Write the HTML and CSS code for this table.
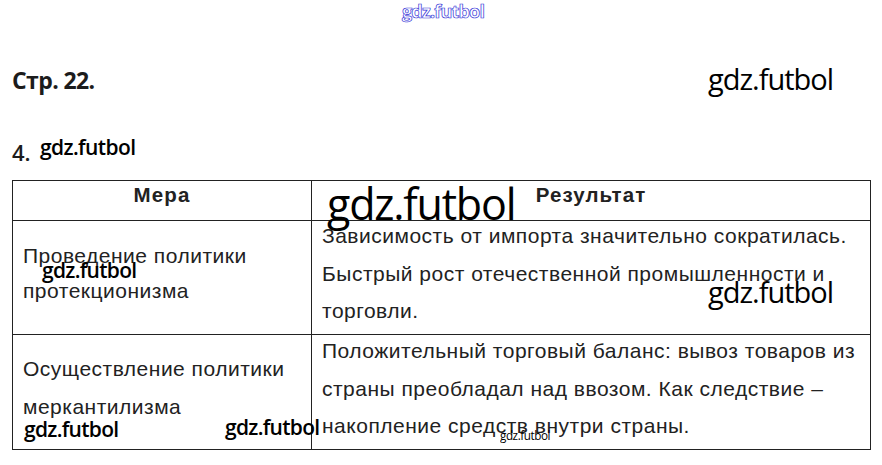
FILE: index.html
```html
<!DOCTYPE html>
<html lang="ru">
<head>
<meta charset="utf-8">
<title>Стр. 22</title>
<link rel="stylesheet" href="styles.css">
</head>
<body>
<div class="page">
  <div class="mark mark-top">gdz.futbol</div>
  <div class="title-row">
    <h1 class="title">Стр. 22.</h1>
  </div>
  <div class="task">4.</div>
  <table class="grid">
    <colgroup><col class="c1"><col class="c2"></colgroup>
    <thead>
      <tr class="head"><th>Мера</th><th>Результат</th></tr>
    </thead>
    <tbody>
      <tr class="r1">
        <td class="measure">Проведение политики<br>протекционизма</td>
        <td class="result"><div class="txt">Зависимость от импорта значительно сократилась.<br>Быстрый рост отечественной промышленности и<br>торговли.</div></td>
      </tr>
      <tr class="r2">
        <td class="measure">Осуществление политики<br>меркантилизма</td>
        <td class="result"><div class="txt">Положительный торговый баланс: вывоз товаров из<br>страны преобладал над ввозом. Как следствие –<br>накопление средств внутри страны.</div></td>
      </tr>
    </tbody>
  </table>

  <div class="mark m-right1">gdz.futbol</div>
  <div class="mark m-task">gdz.futbol</div>
  <div class="mark m-big">gdz.futbol</div>
  <div class="mark m-left1">gdz.futbol</div>
  <div class="mark m-right2">gdz.futbol</div>
  <div class="mark m-left2">gdz.futbol</div>
  <div class="mark m-mid2">gdz.futbol</div>
  <div class="mark m-small">gdz.futbol</div>
</div>
</body>
</html>
```
FILE: styles.css
```css
html, body {
  margin: 0;
  padding: 0;
  background: #fff;
}
.page {
  position: relative;
  width: 882px;
  height: 465px;
  overflow: hidden;
  padding: 64px 0 0 12px;
  box-sizing: border-box;
  color: #1c1c1c;
}
.title-row {
  height: 72px;
}
.title {
  margin: 0;
  font-family: "Open Sans", sans-serif;
  font-weight: 700;
  font-size: 23px;
  line-height: 32px;
  letter-spacing: -0.6px;
}
.task {
  font-family: "Open Sans", sans-serif;
  font-weight: 600;
  font-size: 22px;
  line-height: 26px;
  height: 44px;
  padding-top: 3px;
  box-sizing: border-box;
}
.grid {
  border-collapse: collapse;
  width: 858px;
  table-layout: fixed;
  font-family: "Liberation Sans", Arial, sans-serif;
  font-size: 21px;
  letter-spacing: 0.5px;
  color: #222;
}
.c1 { width: 299px; }
.c2 { width: 559px; }
.grid th, .grid td {
  border: 1.5px solid #222;
  padding: 0 10px;
  vertical-align: top;
}
.grid th {
  font-size: 20.5px;
  font-weight: 700;
  letter-spacing: 1.1px;
  text-align: center;
  line-height: normal;
  padding-top: 2px;
}
.head { height: 40px; }
.r1 { height: 114px; }
.r2 { height: 115px; }
.measure {
  padding-left: 10px;
}
.r1 .measure {
  line-height: 35px;
  padding-top: 17px;
}
.r2 .measure {
  line-height: 38px;
  padding-top: 15px;
}
.result {
  line-height: 37.5px;
  padding-left: 11px;
}
.r1 .txt { margin-top: -4px; }
.r2 .txt { margin-top: -3px; }

.mark {
  position: absolute;
  font-family: "Open Sans", sans-serif;
  color: #000;
  white-space: nowrap;
  letter-spacing: -0.5px;
  line-height: 1;
}
.mark-top {
  left: 402px;
  top: 2px;
  line-height: 1;
  font-size: 18px;
  font-weight: 700;
  color: #fff;
  -webkit-text-stroke: 0.7px #3434d8;
  letter-spacing: -0.8px;
}
.m-right1 { left: 708px; top: 64px; font-size: 29px; letter-spacing: -1px; }
.m-task { left: 40px; top: 137px; font-size: 21px; font-weight: 600; letter-spacing: -0.6px; }
.m-big { left: 327px; top: 182px; font-size: 43px; font-weight: 500; letter-spacing: -1.2px; }
.m-left1 { left: 42px; top: 260px; font-size: 21px; font-weight: 600; letter-spacing: -0.7px; }
.m-right2 { left: 708px; top: 277px; font-size: 29px; letter-spacing: -1px; }
.m-left2 { left: 24px; top: 419px; font-size: 21px; font-weight: 600; letter-spacing: -0.7px; }
.m-mid2 { left: 225px; top: 417px; font-size: 21px; font-weight: 600; letter-spacing: -0.7px; }
.m-small { left: 500px; top: 429px; font-size: 13px; letter-spacing: -0.5px; transform: scaleX(0.9); transform-origin: left; }
```
